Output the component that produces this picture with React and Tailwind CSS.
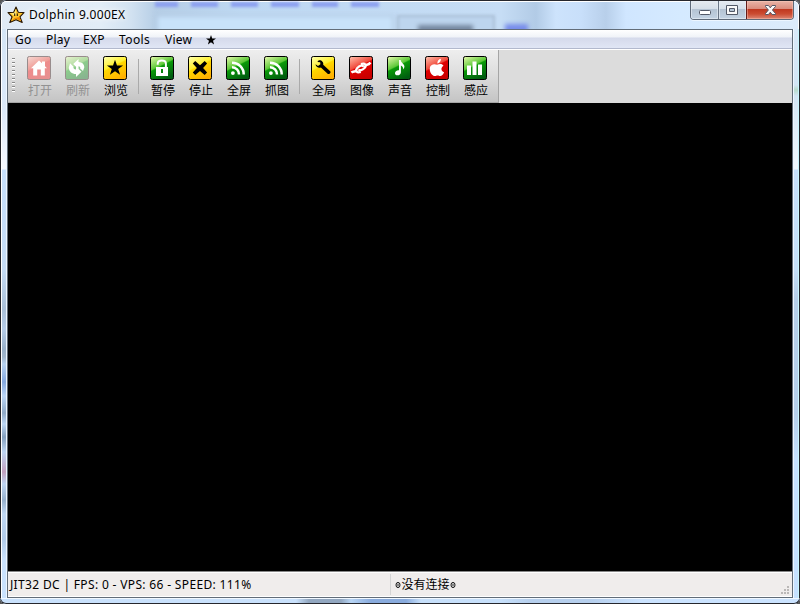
import React from 'react';

const tones = {
  red: ['#ffb4a0', '#f04a3c', '#e00000', '#c80000'],
  green: ['#d8f5a0', '#5cc838', '#0a9a08', '#005c10'],
  yellow: ['#ffffa0', '#fff030', '#ffd800', '#ffb000'],
  fadedRed: ['#f6d2cc', '#f0a09a', '#ee8c8c', '#e89090'],
  fadedGreen: ['#e2f0cc', '#b0dca0', '#8ccc8c', '#88b490'],
};

const Rss = () => (
  <g fill="none" stroke="#fff" strokeWidth="2.5">
    <circle cx="6.9" cy="17.1" r="1.9" fill="#fff" stroke="none" />
    <path d="M6 11.2a7 7 0 0 1 7 7.3" />
    <path d="M6 6.7a11.5 11.5 0 0 1 11.7 11.8" />
  </g>
);

const glyphs = {
  home: <path fill="#fff" d="M12 4.5 15 7.3V5.5h3v4.8l2 2h-2.2V19.5h-4V13.5h-3.6v6H6.2V12.3H4z" />,
  refresh: (
    <g fill="#fff">
      <path d="M13.5 3v3c3.8.2 5.8 2.4 5.8 5.2L18 15l-2.9-2.6c.5-1.1-.2-2-1.6-2.1v3L8.2 8z" />
      <path d="M11 21v-3c-4.3-.1-7-2.6-7.2-6.6L5 7.3l3.4 3.2c-.2 1.7.8 3 2.6 3.1v-3l5.5 5.2z" />
    </g>
  ),
  star: <path fill="#000" d="m12 3.8 2 5.8h6.1L15.2 13l1.9 5.8L12 15.3l-5.1 3.5L8.8 13 3.9 9.6H10z" />,
  lock: (
    <g>
      <path fill="none" stroke="#fff" strokeWidth="2" d="M7.7 8.8V7.7c0-2 1.7-3.2 4.1-3.2s4.1 1.2 4.1 3.2V12" />
      <path fill="#fff" fillRule="evenodd" d="M6 11h12v9H6zm5 2v4h2v-4z" />
    </g>
  ),
  close: <path fill="#000" d="m7.2 5 4.8 4.2L16.7 5l2.4 2.5-4 4.5 4 4.6-2.4 2.5-4.7-4.2-4.8 4.2-2.4-2.5 4.1-4.6-4.1-4.5z" />,
  rss: <Rss />,
  wrench: <path fill="#000" d="M7.8 4.2c2.6-.5 5.1 1.8 4.4 4.6l7 6.4c1.2 1.1-.9 3.7-2.3 2.7l-7-6.3c-2.5.9-5-.6-5.4-3.3L7 10.1l2.4-1.9-.2-1.9L6.3 6z" />,
  link: (
    <g fill="none" stroke="#fff" strokeWidth="2.6">
      <path d="M2.4 16.6C4.4 15 6 16 8 14.4M15.8 9.6c1.9-1.4 3.4-.1 5.6-3.2" />
      <path strokeWidth="2.3" d="M11.8 16c-4.2 1.4-6-1.2-3.5-4 2.3-2.5 5.6-3.2 6.2-1.2M12 8.1c4.2-1.4 6 1.2 3.5 3.9-2.2 2.3-5 3-5.9 1.4" />
    </g>
  ),
  note: <path fill="#fff" d="M12 4h1.7c.1 2.6 3.7 3.7 3.7 6.5 0 1.2-.5 2.1-1.2 3 .1-2.2-.6-3.4-2.3-4.1v6.8c0 2-1.4 3.1-3.6 3.1s-3.1-2.5-1.4-4.1c.9-.8 1.9-1 3.1-.9z" />,
  apple: <path fill="#fff" d="M12.3 7.6c0-2.8 1.4-4.4 3.6-4.8.1 2.8-1.4 4.5-3.6 4.8zm-.2 1.1c1.7-.8 4.8-1.4 6.4 1-3 2-2.6 5.2.6 6.6-1.2 3-2.8 4.1-4.7 3.6-1.6-.4-2-.4-3.6 0-3.4.9-6.6-4.1-6-8 .6-3.7 4.4-4.4 7.3-3.2z" />,
  bars: <path fill="#fff" d="M4 9.5h4V19H4zm5.5-4h4V19h-4zm5.5 3h4V19h-4z" />,
};

function ToolButton({ label, glyph, tone, disabled }) {
  const [a, b, c, d] = tones[tone];
  const id = `${tone}-${glyph}`;
  return (
    <div className={`flex w-[38px] shrink-0 flex-col items-center pt-1.5 ${disabled ? 'text-[#929292]' : 'text-black'}`}>
      <svg width="24" height="24" viewBox="0 0 24 24">
        <defs>
          <linearGradient id={id} x1=".15" y1="0" x2=".65" y2="1">
            <stop offset="0" stopColor={a} />
            <stop offset=".42" stopColor={b} />
            <stop offset=".47" stopColor={c} />
            <stop offset="1" stopColor={d} />
          </linearGradient>
        </defs>
        <rect x=".5" y=".5" width="23" height="23" rx="1.8" fill={`url(#${id})`} stroke={disabled ? '#988c8c' : '#000'} />
        {glyphs[glyph]}
      </svg>
      <span className="mt-[3px] pl-[2px] text-[12px] leading-4 whitespace-nowrap">{label}</span>
    </div>
  );
}

const Separator = () => (
  <div className="flex w-[9px] shrink-0 justify-center pt-[9px]">
    <div className="h-[35px] w-px bg-[#aaaaaa]" />
  </div>
);

function SideFrame({ right }) {
  return (
    <div className={`flex w-[7px] shrink-0 ${right ? 'flex-row-reverse' : ''}`}>
      <div className="w-px bg-[#26272d]" />
      <div className={`w-px ${right ? 'bg-[#c9f6ff]' : 'bg-white'}`} />
      <div
        className={`flex-1 ${
          right
            ? 'bg-[linear-gradient(180deg,#d9e9f8_0,#d3e5f5_56px,#b9dccd_61px,#d3e5f5_67px,#f1f8ff_140px,#c7e0fb_141px,#c5dff9_240px,#b5cee9_270px,#b5cfeb_385px,#c6e1ff_430px,#c6e1ff_100%)]'
            : 'bg-[linear-gradient(180deg,#d4e5f6_0,#dce9f9_80px,#f7faff_140px,#c7e0fc_141px,#c5dcf5_240px,#a9bfd7_280px,#b5cce8_300px,#98b0c9_320px,#a1b6cc_328px,#b8d3f1_335px,#85a9e0_353px,#bbd6f6_367px,#8fa9c6_384px,#bdd7f5_395px,#839fbd_408px,#bdd5f2_423px,#c1a1bf_443px,#bed5f2_455px,#95afcb_471px,#c0d8f4_485px,#b1cbe9_510px,#cae2fd_530px,#cae2fd_100%)]'
        }`}
      />
      <div className="w-px bg-[#eef6ff]" />
    </div>
  );
}

function TitleBar() {
  return (
    <header className="relative flex h-[29px] shrink-0 justify-between overflow-hidden rounded-t-[6px] border-x border-t border-[#26272d] bg-[linear-gradient(90deg,#e0eaf5_0,#e2edf7_100px,#d2e2f1_130px,#b6cee6_155px,#bed8f2_240px,#c6ddf5_500px,#b2cbe6_535px,#cde3fc_555px,#c8dffa_580px,#b8cfea_605px,#d0e6ff_625px,#d5eaff_680px,#dcebfa_100%)]">
      <div className="absolute inset-0 rounded-t-[5px] border-x border-t border-white" />
      <div className="absolute top-px left-[154px] flex gap-[13px] blur-[1.5px]">
        {['w-[23px]', 'w-[27px]', 'w-[27px]', 'w-[28px]', 'w-[26px]', 'w-[28px]'].map((w, i) => (
          <div key={i} className={`h-[5px] ${w} bg-[#8b9ff0]`} />
        ))}
      </div>
      <div className="absolute top-[14px] left-[155px] h-6 w-[238px] border-2 border-[#b4cbe3] bg-[#c8e2fa] blur-[2px]" />
      <div className="absolute top-[14px] left-[396px] h-6 w-[98px] border-2 border-[#a9bdd4] bg-[#bdd5ee] blur-[1.5px]" />
      <div className="absolute top-[24px] left-[417px] h-3 w-[55px] bg-[#7588a0] blur-[2px]" />
      <div className="absolute top-[23px] left-[504px] h-3 w-[23px] bg-[#788deb] blur-[2px]" />
      <div className="relative flex items-start pl-[6px]">
        <svg className="mt-[5px]" width="18" height="18" viewBox="0 0 18 18">
          <path d="m9 1 2.3 5.2 5.7.4-4.1 4.2 2.3 5.7L9 13.8l-6.2 2.7 2.3-5.7L1 6.6l5.7-.4z" fill="#ffc52b" stroke="#281602" strokeWidth="1.1" strokeLinejoin="round" />
          <path d="M8.6 3 7.3 7 3.5 7.5 7 9.2 9 8.5z" fill="#fff08a" />
          <path d="m12.5 11 1.5 4-4.7-2.2-5 2.2 3.4-3z" fill="#ec8906" />
          <path d="M7.7 7.4v2.6M10.3 7.4v2.6" stroke="#1b1000" strokeWidth="1" />
        </svg>
        <span className="mt-[6px] ml-1 text-[12px] leading-4 tracking-[0.3px] text-black [text-shadow:0_0_5px_white,0_0_7px_white]">Dolphin 9.000EX</span>
      </div>
      <div className="relative mr-[5px] flex h-[19px] overflow-hidden rounded-b-[4px] border border-t-0 border-[#5e6a79] shadow-[0_1px_0_#edf6ff]">
        <div className="w-7 border-r border-[#6a7686] bg-[linear-gradient(#e5eaf0_0,#d5dfe9_45%,#b4c3d3_46%,#c3d3e3_100%)] shadow-[inset_0_0_0_1px_#e5edf5aa]">
          <svg width="27" height="18"><rect x="8.5" y="9.5" width="11" height="4" rx="1" fill="#fff" stroke="#525967" /></svg>
        </div>
        <div className="w-[27px] bg-[linear-gradient(#e5eaf0_0,#d5dfe9_45%,#b4c3d3_46%,#c3d3e3_100%)] shadow-[inset_0_0_0_1px_#e5edf5aa]">
          <svg width="27" height="18"><path fillRule="evenodd" d="M7.5 4.5h11v9h-11zm3 3v3h5v-3z" fill="#f9f9f9" stroke="#525967" /></svg>
        </div>
        <div className="w-[47px] border-l border-[#641c18] bg-[linear-gradient(#e9b4a7_0,#d98b7c_45%,#bf371f_46%,#cb4c32_72%,#dc8775_100%)] shadow-[inset_0_0_0_1px_#ffd3c466]">
          <svg width="46" height="18"><path d="M18.5 4.5h3l1.8 2.3 1.8-2.3h3.4v1l-3.1 3.5 3.1 3.5v1h-3.4l-1.8-2.3-1.8 2.3h-3v-1l2.9-3.5-2.9-3.5z" fill="#fafafa" stroke="#555866" /></svg>
        </div>
      </div>
    </header>
  );
}

const StatusMark = () => (
  <svg className="mt-px shrink-0" width="6" height="8" viewBox="0 0 6 8">
    <ellipse cx="3" cy="4" rx="2" ry="2.6" fill="#fff" stroke="#111" strokeWidth="1" />
    <path d="M3 2.6v2.8" stroke="#111" strokeWidth="1" />
  </svg>
);

export default function App() {
  return (
    <div className="h-[604px] w-[800px] overflow-hidden bg-[#555] font-['Noto_Sans','Noto_Sans_CJK_SC',sans-serif]">
      <div className="flex h-full flex-col overflow-hidden rounded-[6px] bg-[#c9e1fb]">
        <TitleBar />
        <div className="flex h-[569px] shrink-0">
          <SideFrame />
          <main className="flex w-[786px] shrink-0 flex-col border border-[#626d79] bg-white">
            <nav className="flex h-[20px] shrink-0 border-b border-white bg-[linear-gradient(#fff_0,#f0f3f8_7px,#d5daeb_8px,#e0e6f5_18px,#b2b9cd_18px)] text-[12px] leading-[20px] tracking-[0.25px] text-black">
              <span className="ml-[7px] w-[31px]">Go</span>
              <span className="w-[37px]">Play</span>
              <span className="w-[36px]">EXP</span>
              <span className="w-[46px] tracking-[0.4px]">Tools</span>
              <span className="w-[40px]">View</span>
              <svg className="mt-[4px]" width="12" height="12" viewBox="0 0 12 12"><path d="M6 1 7.2 4.6H11L8 6.8 9.1 10.5 6 8.3 2.9 10.5 4 6.8 1 4.6h3.8z" /></svg>
            </nav>
            <section className="flex h-[53px] shrink-0 bg-[#dcdcdc]">
              <div className="flex w-[491px] border-r border-b border-[#a5a5a5] bg-[linear-gradient(#eeeeee_0,#dedede_45%,#c4c4c4_100%)]">
                <div className="w-3 pt-2 pl-1">
                  <div className="h-[35px] w-[3px] bg-[repeating-linear-gradient(180deg,#888_0,#888_1px,#fff_1px,#fff_2px,transparent_2px,transparent_4px)]" />
                </div>
                <ToolButton label="打开" glyph="home" tone="fadedRed" disabled />
                <ToolButton label="刷新" glyph="refresh" tone="fadedGreen" disabled />
                <ToolButton label="浏览" glyph="star" tone="yellow" />
                <Separator />
                <ToolButton label="暂停" glyph="lock" tone="green" />
                <ToolButton label="停止" glyph="close" tone="yellow" />
                <ToolButton label="全屏" glyph="rss" tone="green" />
                <ToolButton label="抓图" glyph="rss" tone="green" />
                <Separator />
                <ToolButton label="全局" glyph="wrench" tone="yellow" />
                <ToolButton label="图像" glyph="link" tone="red" />
                <ToolButton label="声音" glyph="note" tone="green" />
                <ToolButton label="控制" glyph="apple" tone="red" />
                <ToolButton label="感应" glyph="bars" tone="green" />
              </div>
            </section>
            <section className="h-[468px] shrink-0 bg-black" />
            <footer className="flex h-[26px] shrink-0 border-t border-[#878787] bg-[#f0edec] text-[12px] leading-[25px] text-black shadow-[inset_0_1px_0_white,inset_0_-1px_0_white]">
              <span className="w-[382px] pl-[2px] tracking-[0.34px] whitespace-nowrap">JIT32 DC | FPS: 0 - VPS: 66 - SPEED: 111%</span>
              <div className="my-[2px] w-px bg-[#d5d5d5]" />
              <div className="flex items-center pl-[4px]">
                <StatusMark />
                <span className="mx-[0.5px]">没有连接</span>
                <StatusMark />
              </div>
              <svg className="mt-[13px] mr-[2px] ml-auto" width="10" height="11" fill="#bbb8b7"><path d="M7 1h2v2H7zM4 4h2v2H4zm3 0h2v2H7zM1 7h2v2H1zm3 0h2v2H4zm3 0h2v2H7z" /></svg>
            </footer>
          </main>
          <SideFrame right />
        </div>
        <div className="h-[6px] rounded-b-[6px] border-x border-t border-b border-x-[#26272d] border-t-[#f1f8ff] border-b-[#26272d] bg-[linear-gradient(90deg,#c9e1fc_295px,#92a7c0_308px,#92a7c0_340px,#b8d5f5_350px,#89abdd_370px,#89abdd_405px,#c7e0fb_420px,#c7e0fb_500px,#b6cfed_530px,#b6cfed_590px,#cbe3ff_640px)]" />
      </div>
    </div>
  );
}
